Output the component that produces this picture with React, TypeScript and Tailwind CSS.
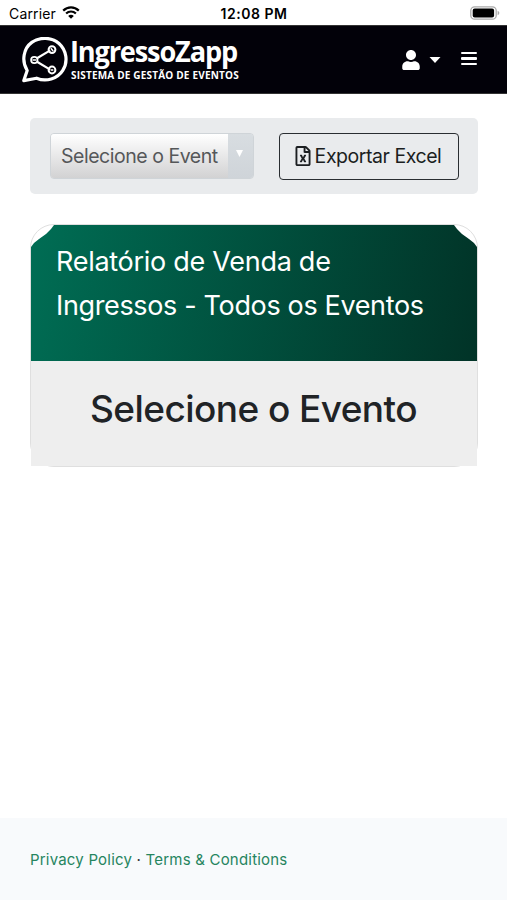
import { FaRegFileExcel, FaUser } from "react-icons/fa";

const footerLinks = ["Privacy Policy", "Terms & Conditions"];

function StatusBar() {
  return (
    <div className="h-[25px] grid grid-cols-3 items-center pl-[9px] pr-[7px] pt-[2px] text-black whitespace-nowrap">
      <div className="flex items-center gap-[6px]">
        <span className="text-[14px] tracking-[0.15px]">Carrier</span>
        <svg viewBox="0 0 18 13" className="w-[18px] h-[13px] -mt-[2px]" fill="none">
          <path
            d="M1.2 4.6C5.6 .3 12.4 .3 16.8 4.6M4.1 7.5c2.8-2.7 7-2.7 9.8 0"
            stroke="#000"
            strokeWidth="2.2"
          />
          <path d="M9 12.7 6.2 9.9c1.6-1.5 4-1.5 5.6 0Z" fill="#000" />
        </svg>
      </div>
      <span className="text-center text-[14px] font-semibold tracking-[0.5px] -ml-[1px]">12:08 PM</span>
      <svg viewBox="0 0 30 14" className="w-[30px] h-[14px] justify-self-end -mt-[2px]">
        <rect x=".8" y=".8" width="25.4" height="12.4" rx="3.8" fill="#fff" stroke="#aaa" strokeWidth="1.3" />
        <rect x="2.7" y="2.6" width="21.4" height="8.8" rx="2" fill="#000" />
        <path d="M27.6 4.8c2.3.9 2.3 3.5 0 4.4Z" fill="#aaa" />
      </svg>
    </div>
  );
}

function Logo() {
  return (
    <div className="flex items-center text-white">
      <svg viewBox="0 0 46 46" className="w-[46px] h-[46px]" fill="none" stroke="#fff">
        <path
          d="M5.2 33.5C-.9 23.7 1.7 11.2 9.8 5.4 18-.5 29.8.2 37 6.5 44.7 13.4 46.2 24.9 40.8 33.3c-5.4 8.5-16.7 12-26.2 7.9L1.8 43.6Z"
          strokeWidth="3.2"
          strokeLinejoin="round"
        />
        <path d="m15 21.2 13.2-7.8M15 24.8l13.2 7.8" strokeWidth="2.2" />
        <circle cx="12.3" cy="23" r="3.2" strokeWidth="1.8" />
        <circle cx="30" cy="12.6" r="3.4" strokeWidth="2" />
        <circle cx="30" cy="33" r="3.4" strokeWidth="2" />
        <path d="M10.5 23h3.6M28.8 11.2l2.4 2.8M28.7 33h2.6" strokeWidth="1.4" />
      </svg>
      <div className="ml-[3px] flex flex-col whitespace-nowrap font-['Open_Sans','Noto_Sans',sans-serif]">
        <span className="text-[28px] leading-[26px] font-bold tracking-[-1.2px] origin-left scale-x-[0.97] -ml-px w-[168px]">
          IngressoZapp
        </span>
        <span className="mt-[5px] text-[10px] leading-[13px] font-bold tracking-[0.19px]">
          SISTEMA DE GESTÃO DE EVENTOS
        </span>
      </div>
    </div>
  );
}

function Navbar() {
  return (
    <nav className="h-[69px] bg-[#020109] border-y border-[#333] flex items-center justify-between pl-[22px] pr-[30px]">
      <Logo />
      <div className="flex items-center text-white">
        <button className="flex items-center gap-[9px]">
          <FaUser className="w-[18px] h-[20px]" />
          <svg viewBox="0 0 12 6" className="w-[12px] h-[6px]">
            <path d="M.5 0h11L6 6Z" fill="#fff" />
          </svg>
        </button>
        <button className="ml-[20px] -mt-[2px] flex flex-col gap-[3px]">
          <span className="w-[16px] h-[2.5px] rounded-[1px] bg-white" />
          <span className="w-[16px] h-[2.5px] rounded-[1px] bg-white" />
          <span className="w-[16px] h-[2.5px] rounded-[1px] bg-white" />
        </button>
      </div>
    </nav>
  );
}

function Filters() {
  return (
    <div className="h-[76px] bg-[#e9ebed] rounded-[5px] pl-[20px] pr-[19px] flex items-center justify-between whitespace-nowrap">
      <button className="w-[204px] h-[46px] flex border border-[#cfd4d8] rounded-[4px] overflow-hidden text-[#555759]">
        <span className="flex-1 h-full flex items-center pl-[10px] pt-[2px] text-[19.5px] tracking-[-0.47px] bg-linear-to-b from-white to-[#d2d2d3]">
          Selecione o Event
        </span>
        <span className="w-[25px] h-full bg-linear-to-b from-[#d8dde1] to-[#cfd4d9] pt-[16px] pl-[8px]">
          <svg viewBox="0 0 7 7" className="w-[7px] h-[7px]">
            <path d="M0 0h7L3.5 7Z" fill="#fff" />
          </svg>
        </span>
      </button>
      <button className="w-[180px] h-[47px] pr-[2px] flex items-center justify-center gap-[4px] border-[1.5px] border-[#292d31] rounded-[4px] text-[19.5px] tracking-[-0.45px] text-[#1b1e21]">
        <FaRegFileExcel className="w-[16px] h-[20px]" />
        <span className="pt-[2px]">Exportar Excel</span>
      </button>
    </div>
  );
}

function ReportCard() {
  return (
    <section className="mt-[30px] h-[243px] border border-[#dfdfdf] rounded-[24px] bg-white">
      <div className="h-[136px] pt-[15px] pl-[25px] bg-linear-[100deg] from-[#006d54] to-[#013327] text-white [clip-path:polygon(0_22px,3px_18px,8px_14px,15px_9px,20px_4px,23px_0,calc(100%_-_23px)_0,calc(100%_-_20px)_4px,calc(100%_-_15px)_9px,calc(100%_-_8px)_14px,calc(100%_-_3px)_18px,100%_22px,100%_100%,0_100%)]">
        <h2 className="text-[27px] leading-[44px] tracking-[-0.35px] whitespace-nowrap">
          <span className="tracking-[-0.28px]">Relatório de Venda de</span>
          <br />
          Ingressos - Todos os Eventos
        </h2>
      </div>
      <div className="h-[105px] bg-[#eee] flex justify-center pt-[25px] pr-px">
        <h1 className="text-[37px] leading-[46px] font-medium tracking-[-0.57px] text-[#202326] whitespace-nowrap">
          Selecione o Evento
        </h1>
      </div>
    </section>
  );
}

function App() {
  return (
    <div className="h-[900px] flex flex-col bg-white overflow-hidden font-['Inter',sans-serif]">
      <StatusBar />
      <Navbar />
      <main className="flex-1 pt-[24px] pl-[30px] pr-[29px]">
        <Filters />
        <ReportCard />
      </main>
      <footer className="h-[82px] bg-[#f8fafc] px-[30px] pt-[2px] flex items-center text-[15px] tracking-[0.2px] text-[#26855f] whitespace-nowrap">
        <a href="#">{footerLinks[0]}</a>
        <span className="px-[4.5px] text-[#333]">·</span>
        <a href="#">{footerLinks[1]}</a>
      </footer>
    </div>
  );
}

export default App;
